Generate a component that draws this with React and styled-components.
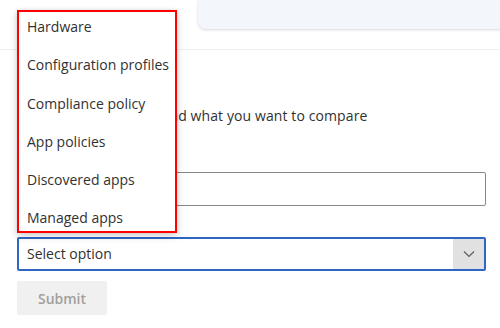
import React from 'react'
import styled, { createGlobalStyle } from 'styled-components'

const GlobalStyle = createGlobalStyle`
  body {
    margin: 0;
    background: #ffffff;
    font-family: 'Open Sans', 'Noto Sans', sans-serif;
    color: #323130;
  }
  * { box-sizing: border-box; }
`

const Page = styled.div`
  position: relative;
  width: 500px;
  height: 328px;
  overflow: hidden;
`

const Header = styled.header`
  display: flex;
  justify-content: flex-end;
  height: 50px;
  border-bottom: 1px solid #f0f0f0;
`

const InfoCard = styled.div`
  width: 310px;
  height: 29px;
  margin-right: -8px;
  background: #f3f7fb;
  border-radius: 0 0 8px 8px;
  box-shadow: 0 1px 3px rgba(0, 0, 0, 0.16);
`

const Form = styled.form`
  display: flex;
  flex-direction: column;
  align-items: flex-start;
  padding: 0 14px 0 17px;
`

const Heading = styled.h2`
  margin: 14px 0 14px;
  font-size: 20px;
  line-height: 28px;
  font-weight: 600;
`

const Description = styled.p`
  margin: 0;
  font-size: 14px;
  line-height: 20px;
  letter-spacing: 0.1px;
`

const Label = styled.label`
  margin: ${p => p.$top}px 0 6px;
  font-size: 14px;
  line-height: 20px;
  font-weight: 600;
`

const TextInput = styled.input`
  width: 100%;
  height: 34px;
  border: 1px solid #8a8886;
  border-radius: 2px;
  padding: 0 10px;
  font: inherit;
  font-size: 14px;
  outline: none;
`

const Select = styled.div`
  display: flex;
  align-items: stretch;
  width: 100%;
  height: 34px;
  border: 2px solid #2f66c5;
  border-radius: 2px;
`

const SelectValue = styled.span`
  flex: 1;
  padding-left: 8px;
  font-size: 14px;
  line-height: 30px;
  color: #323130;
`

const Chevron = styled.span`
  display: flex;
  align-items: center;
  justify-content: center;
  width: 31px;
  background: #e1e1e1;
`

const SubmitButton = styled.button`
  margin-top: 10px;
  width: 90px;
  height: 34px;
  border: none;
  border-radius: 2px;
  background: #f0f0f0;
  color: #a19f9d;
  font-family: inherit;
  font-size: 14px;
  font-weight: 600;
`

const Menu = styled.ul`
  position: absolute;
  top: 10px;
  left: 17px;
  width: 160px;
  display: flex;
  flex-direction: column;
  gap: 11.3px;
  margin: 0;
  padding: 1px 0 0;
  list-style: none;
  background: #ffffff;
  border: 2px solid #ff0000;
  box-shadow: 0 3px 8px rgba(0, 0, 0, 0.18), 0 0 3px rgba(0, 0, 0, 0.1);
`

const Option = styled.li`
  height: 27px;
  padding-left: 8px;
  font-size: 14px;
  line-height: 27px;
  color: #323130;
  white-space: nowrap;
`

const options = [
  'Hardware',
  'Configuration profiles',
  'Compliance policy',
  'App policies',
  'Discovered apps',
  'Managed apps'
]

const App = () => {
  return (
    <Page>
      <GlobalStyle />
      <Header>
        <InfoCard />
      </Header>
      <Form onSubmit={e => e.preventDefault()}>
        <Heading>Compare</Heading>
        <Description>Choose the item type and what you want to compare</Description>
        <Label $top={20}>Name</Label>
        <TextInput type="text" />
        <Label $top={5}>Category</Label>
        <Select>
          <SelectValue>Select option</SelectValue>
          <Chevron>
            <svg width="12" height="8" viewBox="0 0 12 8">
              <path d="M1 1.5 L6 6.5 L11 1.5" fill="none" stroke="#605e5c" strokeWidth="1.2" />
            </svg>
          </Chevron>
        </Select>
        <SubmitButton type="submit" disabled>Submit</SubmitButton>
      </Form>
      <Menu>
        {options.map(option => (
          <Option key={option}>{option}</Option>
        ))}
      </Menu>
    </Page>
  )
}

export default App
